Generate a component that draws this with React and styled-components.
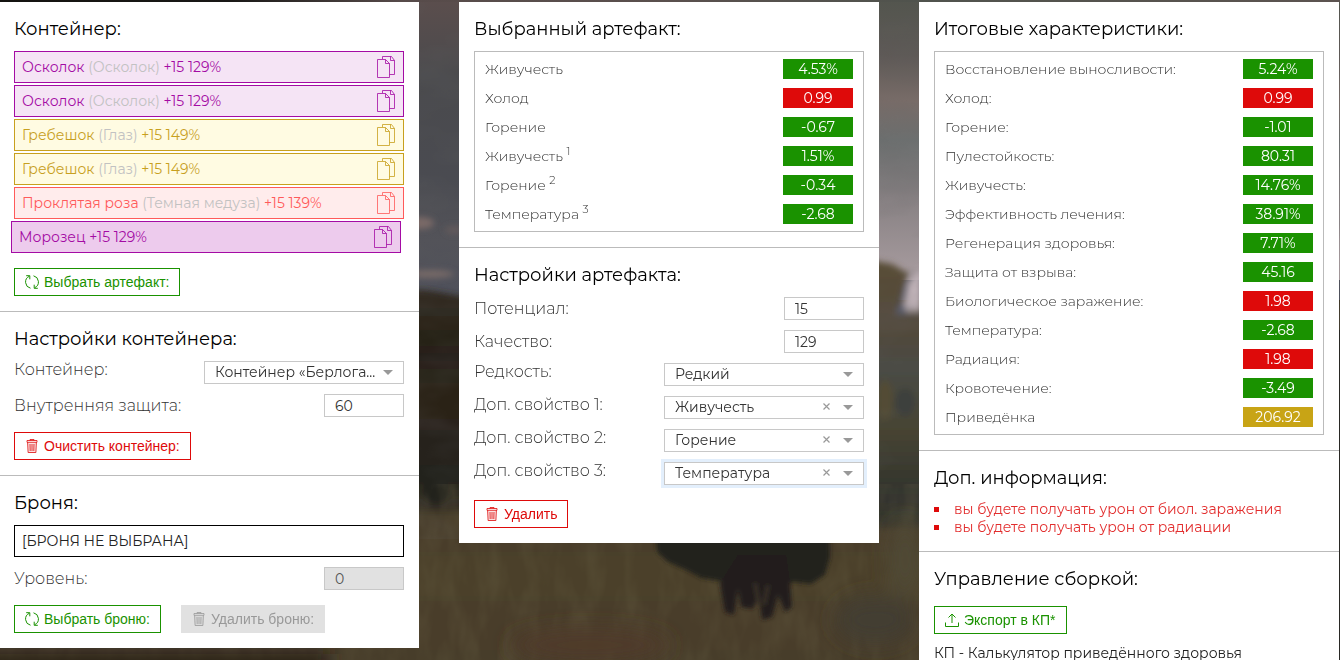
import React from "react";
import styled, { createGlobalStyle, css } from "styled-components";

const colors = {
  green: "#1a9200",
  red: "#de0a0a",
  gold: "#c8a415",
  line: "#bbbbbb",
};

const tones = {
  purple: { main: "#a40ba4", back: "#f5e4f5", active: "#edcbed" },
  yellow: { main: "#c8a01e", back: "#fffbe2", active: "#fff4b8" },
  coral: { main: "#ff5a5a", back: "#ffecec", active: "#ffd5d5" },
};

const GlobalStyle = createGlobalStyle`
  *, *::before, *::after { box-sizing: border-box; }
  html { scrollbar-width: none; background: #3f3728; }
  body {
    margin: 0;
    color: #000;
    font-family: Montserrat, Inter, "Noto Sans", sans-serif;
    font-size: 14px;
    line-height: 18px;
  }
`;

const Scene = styled.svg`
  position: fixed;
  inset: 0;
  width: 100%;
  height: 100%;
  z-index: -1;
`;

const Page = styled.main`
  display: grid;
  grid-template-columns: repeat(3, minmax(0, 1fr));
  align-items: start;
  gap: 40px;
  margin: 2px 1px 0 -1px;
`;

const Column = styled.div`
  background: #fff;
`;

const Section = styled.section`
  padding: 15px;
  & + & { border-top: 1px solid ${colors.line}; }
`;

const Title = styled.h2`
  margin: 0 0 10px;
  font-size: 18px;
  font-weight: 400;
  line-height: 24px;
`;

const SlotList = styled.ul`
  display: grid;
  gap: 2px;
  margin: 0;
  padding: 0;
  list-style: none;
`;

const Slot = styled.li`
  display: flex;
  align-items: center;
  justify-content: space-between;
  height: 32px;
  padding: 0 7px;
  border: 1px solid ${(p) => tones[p.$tone].main};
  background: ${(p) => (p.$active ? tones[p.$tone].active : tones[p.$tone].back)};
  color: ${(p) => tones[p.$tone].main};
  ${(p) => p.$active && css`margin: 0 3px 0 -3px;`}
`;

const Origin = styled.span`
  color: #c2c2c2;
`;

const IconButton = styled.button`
  display: flex;
  padding: 0;
  border: 0;
  background: none;
  color: inherit;
  cursor: pointer;
`;

const Actions = styled.div`
  display: flex;
  gap: 20px;
  margin-top: 15px;
`;

const Button = styled.button`
  display: flex;
  align-items: center;
  gap: 5px;
  height: 28px;
  padding: 0 10px;
  border: 1px solid currentColor;
  background: #fff;
  color: ${(p) => (p.$danger ? colors.red : colors.green)};
  font: 14px "Liberation Sans", Arial, sans-serif;
  cursor: pointer;
  &:disabled {
    border-color: #e1e1e1;
    background: #e1e1e1;
    color: #999;
    cursor: default;
  }
`;

const Fields = styled.div`
  display: grid;
  gap: 10px;
  margin-top: ${(p) => (p.$spaced ? 10 : 0)}px;
`;

const Field = styled.div`
  display: flex;
  align-items: center;
  justify-content: space-between;
  height: 23px;
`;

const Label = styled.label`
  color: #333;
  font-size: 16px;
  font-weight: 300;
  line-height: 20px;
  ${(p) => p.$raised && css`align-self: flex-start; line-height: 18px;`}
`;

const controlStyle = css`
  height: 23px;
  margin: 0;
  border: 1px solid #c8c8c8;
  border-radius: 0;
  outline: 0;
  background: #fff;
  color: #333;
  font-family: inherit;
  font-size: 14px;
`;

const NumberInput = styled.input`
  ${controlStyle}
  width: 80px;
  padding: 0 10px;
  &:disabled { background: #e1e1e1; color: #555; }
`;

const SelectBox = styled.div`
  position: relative;
  width: 200px;
  box-shadow: ${(p) => (p.$focused ? "0 0 0 3px #e3effc" : "none")};
`;

const Select = styled.select`
  ${controlStyle}
  display: block;
  width: 100%;
  padding: 0 26px 2px 10px;
  appearance: none;
`;

const Caret = styled.span`
  position: absolute;
  top: 9px;
  right: 11px;
  border: 5px solid transparent;
  border-top-color: #999;
  border-bottom: 0;
  pointer-events: none;
`;

const Clear = styled(IconButton)`
  position: absolute;
  top: 7px;
  right: 34px;
  color: #999;
`;

const Stats = styled.dl`
  display: grid;
  gap: 9px;
  margin: 0;
  padding: 7px 10px;
  border: 1px solid ${colors.line};
`;

const Stat = styled.div`
  display: flex;
  align-items: center;
  justify-content: space-between;
  height: 20px;
`;

const StatName = styled.dt`
  color: #333;
  font-weight: 300;
  sup { font-size: 11px; line-height: 0; }
`;

const Badge = styled.dd`
  width: 70px;
  margin: 0;
  background: ${(p) => colors[p.$color]};
  color: #fff;
  line-height: 20px;
  text-align: center;
`;

const Armor = styled.div`
  padding: 0 7px;
  border: 1px solid #000;
  color: #222;
  line-height: 30px;
`;

const Warnings = styled.ul`
  margin: 0;
  padding: 0;
  list-style: none;
  color: ${colors.red};
`;

const Warning = styled.li`
  display: flex;
  align-items: center;
  gap: 15px;
  &::before {
    content: "";
    width: 5px;
    height: 5px;
    background: currentColor;
  }
`;

const WarningText = styled.span`
  opacity: 0.85;
`;

const Note = styled.p`
  margin: 10px 0 0;
  color: #222;
`;

const CopyIcon = () => (
  <svg width="19" height="22" viewBox="0 0 19 22" fill="none" stroke="currentColor" strokeOpacity=".8" aria-hidden="true">
    <path d="M8.500 3.500H.5v18h12v-14zM8.500 3.500v4h4M5.500 3V.5h9l3 4V18.500h-5M13.500.5v4h4" />
  </svg>
);

const RefreshIcon = () => (
  <svg width="14" height="14" viewBox="0 0 14 14" fill="none" stroke="currentColor" aria-hidden="true">
    <path d="M5.500 13.200A6.300 6.300 0 0 1 4.300 1.300M1.200.7h3.600v3.600M8.500.8a6.300 6.300 0 0 1 1.200 11.900M12.800 13.300H9.200V9.700" />
  </svg>
);

const TrashIcon = () => (
  <svg width="14" height="14" viewBox="0 0 14 14" fill="none" stroke="currentColor" strokeWidth=".8" aria-hidden="true">
    <path d="M2 1.500h10v1.800H2zM5 1.500V.5h4v1M2.600 3.300l.5 10.200h7.800l.5-10.200M5 5l.2 7M7 5v7M9 5l-.2 7" />
    <path d="M2.600 3.300h8.800l-.5 10.200H3.100z" fill="currentColor" fillOpacity=".12" stroke="none" />
  </svg>
);

const UploadIcon = () => (
  <svg width="14" height="14" viewBox="0 0 14 14" fill="none" stroke="currentColor" aria-hidden="true">
    <path d="M7 10V1M3.500 4.500L7 1l3.500 3.500M.5 9.500v4h13v-4" />
  </svg>
);

const ClearIcon = () => (
  <svg width="7" height="7" viewBox="0 0 7 7" fill="none" stroke="currentColor" strokeWidth="1.200" aria-hidden="true">
    <path d="M.5.5l6 6M6.500.5l-6 6" />
  </svg>
);

const slots = [
  { name: "Осколок", origin: "Осколок", bonus: "+15 129%", tone: "purple" },
  { name: "Осколок", origin: "Осколок", bonus: "+15 129%", tone: "purple" },
  { name: "Гребешок", origin: "Глаз", bonus: "+15 149%", tone: "yellow" },
  { name: "Гребешок", origin: "Глаз", bonus: "+15 149%", tone: "yellow" },
  { name: "Проклятая роза", origin: "Темная медуза", bonus: "+15 139%", tone: "coral" },
  { name: "Морозец", bonus: "+15 129%", tone: "purple", active: true },
];

const artifactStats = [
  ["Живучесть", "4.53%", "green"],
  ["Холод", "0.99", "red"],
  ["Горение", "-0.67", "green"],
  ["Живучесть", "1.51%", "green", 1],
  ["Горение", "-0.34", "green", 2],
  ["Температура", "-2.68", "green", 3],
];

const totalStats = [
  ["Восстановление выносливости:", "5.24%", "green"],
  ["Холод:", "0.99", "red"],
  ["Горение:", "-1.01", "green"],
  ["Пулестойкость:", "80.31", "green"],
  ["Живучесть:", "14.76%", "green"],
  ["Эффективность лечения:", "38.91%", "green"],
  ["Регенерация здоровья:", "7.71%", "green"],
  ["Защита от взрыва:", "45.16", "green"],
  ["Биологическое заражение:", "1.98", "red"],
  ["Температура:", "-2.68", "green"],
  ["Радиация:", "1.98", "red"],
  ["Кровотечение:", "-3.49", "green"],
  ["Приведёнка", "206.92", "gold"],
];

const StatTable = ({ items }) => (
  <Stats>
    {items.map(([name, value, color, mark], i) => (
      <Stat key={i}>
        <StatName>{name}{mark && <> <sup>{mark}</sup></>}</StatName>
        <Badge $color={color}>{value}</Badge>
      </Stat>
    ))}
  </Stats>
);

const NumberField = ({ id, label, value, disabled }) => (
  <Field>
    <Label htmlFor={id}>{label}</Label>
    <NumberInput id={id} type="text" inputMode="numeric" defaultValue={value} disabled={disabled} />
  </Field>
);

const SelectField = ({ id, label, value, clearable, focused }) => (
  <Field>
    <Label htmlFor={id} $raised>{label}</Label>
    <SelectBox $focused={focused}>
      <Select id={id} defaultValue={value}>
        <option>{value}</option>
      </Select>
      {clearable && <Clear type="button" aria-label="Сбросить"><ClearIcon /></Clear>}
      <Caret />
    </SelectBox>
  </Field>
);

const Backdrop = () => (
  <Scene viewBox="0 0 1340 660" preserveAspectRatio="none" aria-hidden="true">
    <defs>
      <linearGradient id="dusk" x1="0" y1="0" x2="0" y2="1">
        <stop offset="0" stopColor="#5b4e4d" />
        <stop offset=".25" stopColor="#4a4a4d" />
        <stop offset=".6" stopColor="#4a4b51" />
        <stop offset=".8" stopColor="#535359" />
        <stop offset="1" stopColor="#4e505b" />
      </linearGradient>
      <linearGradient id="glow" x1="0" y1="0" x2="0" y2="1">
        <stop offset="0" stopColor="#53554e" />
        <stop offset=".2" stopColor="#5e5956" />
        <stop offset=".36" stopColor="#786c68" />
        <stop offset=".5" stopColor="#6c6f6f" />
        <stop offset=".7" stopColor="#868082" />
        <stop offset=".95" stopColor="#a3989b" />
      </linearGradient>
      <linearGradient id="blend">
        <stop offset="0" stopColor="#000" />
        <stop offset="1" stopColor="#fff" />
      </linearGradient>
      <mask id="east">
        <rect x="459" width="420" height="300" fill="url(#blend)" />
        <rect x="879" width="461" height="300" fill="#fff" />
      </mask>
      <linearGradient id="woods" x1="0" y1="0" x2="0" y2="1">
        <stop offset="0" stopColor="#30291c" />
        <stop offset=".3" stopColor="#241e16" />
        <stop offset=".5" stopColor="#2c2419" />
        <stop offset=".85" stopColor="#23231c" />
        <stop offset="1" stopColor="#342e22" />
      </linearGradient>
      <linearGradient id="grove" x1="0" y1="0" x2="0" y2="1">
        <stop offset="0" stopColor="#5a4e38" />
        <stop offset=".28" stopColor="#51483b" />
        <stop offset=".4" stopColor="#4b4c46" />
        <stop offset=".65" stopColor="#464332" />
        <stop offset=".9" stopColor="#2f322d" />
        <stop offset="1" stopColor="#383728" />
      </linearGradient>
      <linearGradient id="field" x1="0" y1="0" x2="0" y2="1">
        <stop offset="0" stopColor="#463b2c" />
        <stop offset=".4" stopColor="#4c402c" />
        <stop offset="1" stopColor="#463b2b" />
      </linearGradient>
      <linearGradient id="rim">
        <stop offset="0" stopColor="#141310" />
        <stop offset=".17" stopColor="#191816" />
        <stop offset=".3" stopColor="#574b4a" />
        <stop offset=".5" stopColor="#5a504d" />
        <stop offset=".68" stopColor="#50534d" />
        <stop offset="1" stopColor="#5c5350" />
      </linearGradient>
      <filter id="soft"><feGaussianBlur stdDeviation="3" /></filter>
      <filter id="crisp"><feGaussianBlur stdDeviation="2" /></filter>
      <filter id="wide" x="-50%" y="-50%" width="200%" height="200%"><feGaussianBlur stdDeviation="10" /></filter>
      <filter id="grass">
        <feTurbulence type="fractalNoise" baseFrequency=".05 .02" numOctaves="3" seed="4" />
        <feColorMatrix values="0 0 0 0 .14  0 0 0 0 .12  0 0 0 0 .06  1.600 0 0 0 -.6" />
      </filter>
      <filter id="haze">
        <feTurbulence type="fractalNoise" baseFrequency=".015 .03" numOctaves="3" seed="9" />
        <feColorMatrix values="0 0 0 0 .12  0 0 0 0 .12  0 0 0 0 .12  1.500 0 0 0 -.6" />
      </filter>
    </defs>
    <rect width="1340" height="300" fill="url(#dusk)" />
    <rect width="1340" height="280" fill="url(#glow)" mask="url(#east)" />
    <g filter="url(#soft)">
      <ellipse cx="420" cy="223" rx="14" ry="6" fill="#7c6a68" />
      <ellipse cx="454" cy="230" rx="9" ry="4" fill="#645a5b" />
      <ellipse cx="430" cy="274" rx="24" ry="4" fill="#786a67" />
      <rect x="-20" y="500" width="1400" height="180" fill="url(#field)" />
      <path d="M380 290h45l40 7h200v215H380z" fill="url(#woods)" />
      <path d="M660 300l210-40 22 4 17 10-6 14-5 26 40 2v212H660z" fill="url(#grove)" />
      <path d="M908 282l14-14v44h-20z" fill="#c0b2b8" />
      <path d="M895 314l7-14 6 14z" fill="#595b6d" />
      <ellipse cx="436" cy="493" rx="14" ry="12" fill="#23201d" />
      <ellipse cx="885" cy="400" rx="8" ry="20" fill="#534b35" />
      <ellipse cx="905" cy="402" rx="10" ry="14" fill="#3d403c" />
    </g>
    <rect y="500" width="1340" height="160" filter="url(#grass)" opacity=".4" />
    <rect width="1340" height="490" filter="url(#haze)" opacity=".3" />
    <g filter="url(#wide)">
      <ellipse cx="590" cy="645" rx="80" ry="16" fill="#503b2a" />
      <ellipse cx="875" cy="620" rx="40" ry="24" fill="#423c32" />
      <ellipse cx="905" cy="560" rx="16" ry="40" fill="#504835" />
      <rect x="-20" y="654" width="350" height="20" fill="#281e18" />
    </g>
    <g filter="url(#crisp)">
      <path d="M655 525h174l1 32-5 18-14 9-18-2-13 5-22-4-24 2-14-4-19-3-15-8-18-8-11-10z" fill="#24211a" />
      <path d="M738 555h48l4 28 2 24-7 5-7-17-6 22-10 3-3-25-6 14-12-2-3-18-4 26-9-3-5-28z" fill="#201d1d" />
      <path d="M755 583l4 22M768 585l-4 20" stroke="#3c3429" strokeWidth="3" />
    </g>
    <rect width="1340" height="2" fill="url(#rim)" />
    <rect x="1339" y="330" width="1" height="330" fill="#292824" />
  </Scene>
);

export default function App() {
  return (
    <>
      <GlobalStyle />
      <Backdrop />
      <Page>
        <Column>
          <Section>
            <Title>Контейнер:</Title>
            <SlotList>
              {slots.map((s, i) => (
                <Slot key={i} $tone={s.tone} $active={s.active}>
                  <span>{s.name} {s.origin && <Origin>({s.origin}) </Origin>}{s.bonus}</span>
                  <IconButton type="button" aria-label="Копировать"><CopyIcon /></IconButton>
                </Slot>
              ))}
            </SlotList>
            <Actions>
              <Button type="button"><RefreshIcon />Выбрать артефакт:</Button>
            </Actions>
          </Section>
          <Section>
            <Title>Настройки контейнера:</Title>
            <Fields>
              <SelectField id="container" label="Контейнер:" value="Контейнер «Берлога..." />
              <NumberField id="protection" label="Внутренняя защита:" value="60" />
            </Fields>
            <Actions>
              <Button type="button" $danger><TrashIcon />Очистить контейнер:</Button>
            </Actions>
          </Section>
          <Section>
            <Title>Броня:</Title>
            <Armor>[БРОНЯ НЕ ВЫБРАНА]</Armor>
            <Fields $spaced>
              <NumberField id="level" label="Уровень:" value="0" disabled />
            </Fields>
            <Actions>
              <Button type="button"><RefreshIcon />Выбрать броню:</Button>
              <Button type="button" disabled><TrashIcon />Удалить броню:</Button>
            </Actions>
          </Section>
        </Column>

        <Column>
          <Section>
            <Title>Выбранный артефакт:</Title>
            <StatTable items={artifactStats} />
          </Section>
          <Section>
            <Title>Настройки артефакта:</Title>
            <Fields>
              <NumberField id="potential" label="Потенциал:" value="15" />
              <NumberField id="quality" label="Качество:" value="129" />
              <SelectField id="rarity" label="Редкость:" value="Редкий" />
              <SelectField id="extra1" label="Доп. свойство 1:" value="Живучесть" clearable />
              <SelectField id="extra2" label="Доп. свойство 2:" value="Горение" clearable />
              <SelectField id="extra3" label="Доп. свойство 3:" value="Температура" clearable focused />
            </Fields>
            <Actions>
              <Button type="button" $danger><TrashIcon />Удалить</Button>
            </Actions>
          </Section>
        </Column>

        <Column>
          <Section>
            <Title>Итоговые характеристики:</Title>
            <StatTable items={totalStats} />
          </Section>
          <Section>
            <Title>Доп. информация:</Title>
            <Warnings>
              <Warning><WarningText>вы будете получать урон от биол. заражения</WarningText></Warning>
              <Warning><WarningText>вы будете получать урон от радиации</WarningText></Warning>
            </Warnings>
          </Section>
          <Section>
            <Title>Управление сборкой:</Title>
            <Actions>
              <Button type="button"><UploadIcon />Экспорт в КП*</Button>
            </Actions>
            <Note>КП - Калькулятор приведённого здоровья</Note>
          </Section>
        </Column>
      </Page>
    </>
  );
}
